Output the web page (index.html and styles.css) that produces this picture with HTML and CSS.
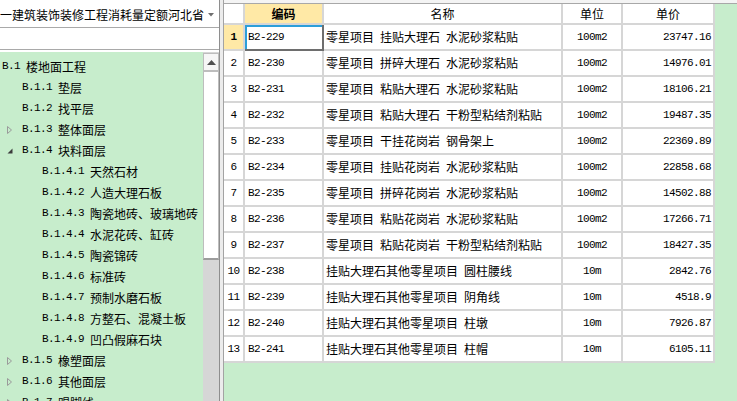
FILE: index.html
```html
<!DOCTYPE html>
<html lang="zh">
<head>
<meta charset="utf-8">
<title>定额库</title>
<link rel="stylesheet" href="styles.css">
</head>
<body>
<div class="app">
  <aside class="left">
    <div class="combo">
      <span class="combo-text">一建筑装饰装修工程消耗量定额河北省</span>
      <svg class="combo-arrow" width="6" height="4" viewBox="0 0 6 4"><polygon points="0,0 6,0 3,3.5" fill="#6f6f6f"/></svg>
    </div>
    <div class="search"></div>
    <div class="tree-wrap">
      <ul class="tree">
        <li class="node l0"><span class="m">B.1</span>楼地面工程</li>
        <li class="node l1"><span class="tg"></span><span class="m">B.1.1</span>垫层</li>
        <li class="node l1"><span class="tg"></span><span class="m">B.1.2</span>找平层</li>
        <li class="node l1"><span class="tg"><svg width="6" height="8" viewBox="0 0 6 8"><polygon points="0.5,0.5 4.5,4 0.5,7.5" fill="none" stroke="#9a9a9a"/></svg></span><span class="m">B.1.3</span>整体面层</li>
        <li class="node l1"><span class="tg"><svg width="6" height="8" viewBox="0 0 6 8"><polygon points="5.5,1.5 5.5,6.5 0.5,6.5" fill="#3c3c3c"/></svg></span><span class="m">B.1.4</span>块料面层</li>
        <li class="node l2"><span class="m">B.1.4.1</span>天然石材</li>
        <li class="node l2"><span class="m">B.1.4.2</span>人造大理石板</li>
        <li class="node l2"><span class="m">B.1.4.3</span>陶瓷地砖、玻璃地砖</li>
        <li class="node l2"><span class="m">B.1.4.4</span>水泥花砖、缸砖</li>
        <li class="node l2"><span class="m">B.1.4.5</span>陶瓷锦砖</li>
        <li class="node l2"><span class="m">B.1.4.6</span>标准砖</li>
        <li class="node l2"><span class="m">B.1.4.7</span>预制水磨石板</li>
        <li class="node l2"><span class="m">B.1.4.8</span>方整石、混凝土板</li>
        <li class="node l2"><span class="m">B.1.4.9</span>凹凸假麻石块</li>
        <li class="node l1"><span class="tg"><svg width="6" height="8" viewBox="0 0 6 8"><polygon points="0.5,0.5 4.5,4 0.5,7.5" fill="none" stroke="#9a9a9a"/></svg></span><span class="m">B.1.5</span>橡塑面层</li>
        <li class="node l1"><span class="tg"><svg width="6" height="8" viewBox="0 0 6 8"><polygon points="0.5,0.5 4.5,4 0.5,7.5" fill="none" stroke="#9a9a9a"/></svg></span><span class="m">B.1.6</span>其他面层</li>
        <li class="node l1"><span class="tg"><svg width="6" height="8" viewBox="0 0 6 8"><polygon points="0.5,0.5 4.5,4 0.5,7.5" fill="none" stroke="#9a9a9a"/></svg></span><span class="m">B.1.7</span>踢脚线</li>
      </ul>
      <div class="vscroll">
        <div class="sb-up"><svg width="9" height="5" viewBox="0 0 9 5"><polygon points="0,5 9,5 4.5,0" fill="#505050"/></svg></div>
        <div class="sb-thumb"></div>
      </div>
    </div>
  </aside>
  <div class="splitter"></div>
  <main class="right">
    <div class="topline"></div>
    <div class="grid">
      <div class="c hd"></div>
      <div class="c hd sel-col">编码</div>
      <div class="c hd">名称</div>
      <div class="c hd">单位</div>
      <div class="c hd">单价</div>

      <div class="c num sel-row m">1</div><div class="c code m cur">B2-229</div><div class="c name">零星项目 挂贴大理石 水泥砂浆粘贴</div><div class="c unit m">100m2</div><div class="c price m">23747.16</div>
      <div class="c num m">2</div><div class="c code m">B2-230</div><div class="c name">零星项目 拼碎大理石 水泥砂浆粘贴</div><div class="c unit m">100m2</div><div class="c price m">14976.01</div>
      <div class="c num m">3</div><div class="c code m">B2-231</div><div class="c name">零星项目 粘贴大理石 水泥砂浆粘贴</div><div class="c unit m">100m2</div><div class="c price m">18106.21</div>
      <div class="c num m">4</div><div class="c code m">B2-232</div><div class="c name">零星项目 粘贴大理石 干粉型粘结剂粘贴</div><div class="c unit m">100m2</div><div class="c price m">19487.35</div>
      <div class="c num m">5</div><div class="c code m">B2-233</div><div class="c name">零星项目 干挂花岗岩 钢骨架上</div><div class="c unit m">100m2</div><div class="c price m">22369.89</div>
      <div class="c num m">6</div><div class="c code m">B2-234</div><div class="c name">零星项目 挂贴花岗岩 水泥砂浆粘贴</div><div class="c unit m">100m2</div><div class="c price m">22858.68</div>
      <div class="c num m">7</div><div class="c code m">B2-235</div><div class="c name">零星项目 拼碎花岗岩 水泥砂浆粘贴</div><div class="c unit m">100m2</div><div class="c price m">14502.88</div>
      <div class="c num m">8</div><div class="c code m">B2-236</div><div class="c name">零星项目 粘贴花岗岩 水泥砂浆粘贴</div><div class="c unit m">100m2</div><div class="c price m">17266.71</div>
      <div class="c num m">9</div><div class="c code m">B2-237</div><div class="c name">零星项目 粘贴花岗岩 干粉型粘结剂粘贴</div><div class="c unit m">100m2</div><div class="c price m">18427.35</div>
      <div class="c num m">10</div><div class="c code m">B2-238</div><div class="c name">挂贴大理石其他零星项目 圆柱腰线</div><div class="c unit m">10m</div><div class="c price m">2842.76</div>
      <div class="c num m">11</div><div class="c code m">B2-239</div><div class="c name">挂贴大理石其他零星项目 阴角线</div><div class="c unit m">10m</div><div class="c price m">4518.9</div>
      <div class="c num m">12</div><div class="c code m">B2-240</div><div class="c name">挂贴大理石其他零星项目 柱墩</div><div class="c unit m">10m</div><div class="c price m">7926.87</div>
      <div class="c num m">13</div><div class="c code m">B2-241</div><div class="c name">挂贴大理石其他零星项目 柱帽</div><div class="c unit m">10m</div><div class="c price m">6105.11</div>
    </div>
  </main>
</div>
</body>
</html>
```

FILE: styles.css
```css
* { box-sizing: border-box; }
html, body { margin: 0; padding: 0; }
body {
  font-family: "Noto Sans CJK SC", "Noto Sans", sans-serif;
  font-size: 12px;
  color: #000;
  background: #fff;
}
.app {
  display: flex;
  width: 737px;
  height: 401px;
  overflow: hidden;
}
.m {
  font-family: "Liberation Mono", "Noto Sans CJK SC", monospace;
  font-size: 11px;
  letter-spacing: -0.6px;
}

/* left panel */
.left {
  width: 220px;
  flex: none;
  display: flex;
  flex-direction: column;
  border-right: 1px solid #8e8e8e;
  background: #fff;
}
.combo {
  height: 28px;
  flex: none;
  display: flex;
  align-items: center;
  padding-top: 3px;
  border-bottom: 1px solid #a9a9a9;
  overflow: hidden;
  white-space: nowrap;
}
.combo-text {
  flex: 1;
  overflow: hidden;
  line-height: 20px;
}
.combo-arrow {
  flex: none;
  margin: 0 5px 0 4px;
}
.search {
  height: 22px;
  flex: none;
  border-bottom: 1px solid #a9a9a9;
}
.tree-wrap {
  flex: 1;
  display: flex;
  margin-top: 2px;
  min-height: 0;
}
.tree {
  flex: 1;
  margin: 0;
  padding: 4px 0 0 0;
  list-style: none;
  background: #c7edcc;
  overflow: hidden;
}
.node {
  height: 21px;
  line-height: 21px;
  display: flex;
  align-items: center;
  white-space: nowrap;
}
.node .m { margin-right: 6px; }
.l0 { padding-left: 2px; }
.l1 { padding-left: 2px; }
.l2 { padding-left: 42px; }
.tg {
  width: 20px;
  flex: none;
  display: flex;
  align-items: center;
  padding-left: 5px;
}
.tg svg { display: block; }

.vscroll {
  width: 16px;
  flex: none;
  background: #d6d6d6;
  display: flex;
  flex-direction: column;
  padding-top: 1px;
}
.sb-up {
  height: 18px;
  background: #f6f6f6;
  border: 1px solid #bdbdbd;
  display: flex;
  align-items: center;
  justify-content: center;
}
.sb-thumb {
  height: 189px;
  background: #fff;
  border: 1px solid #bdbdbd;
  border-bottom: 2px solid #9c9c9c;
}

/* splitter */
.splitter {
  width: 3px;
  flex: none;
  background: #ececec;
  border-right: 1px solid #a3a3a3;
  box-sizing: content-box;
}

/* right panel */
.right {
  flex: 1;
  background: #c7edcc;
  display: flex;
  flex-direction: column;
  align-items: flex-start;
}
.topline {
  align-self: stretch;
  height: 4px;
  flex: none;
  background: #f4f4f4;
  border-bottom: 1px solid #a8a8a8;
}
.grid {
  display: grid;
  grid-template-columns: 21px 79px 239px 60px 92px;
  grid-template-rows: 21px;
  grid-auto-rows: 26px;
  background: #fff;
}
.c {
  display: flex;
  align-items: center;
  border-right: 2px solid #d6d6d6;
  border-bottom: 2px solid #d6d6d6;
  white-space: nowrap;
  overflow: hidden;
}
.hd {
  justify-content: center;
  background: #fff;
}
.sel-col {
  background: #ffe9a6;
  font-weight: bold;
}
.num { justify-content: center; }
.sel-row {
  background: #ffe9a6;
  font-weight: bold;
}
.code { padding-left: 3px; }
.cur {
  box-shadow: inset 2px 2px 0 #2c9fd9;
  border-right-color: #6e6e6e;
  border-bottom-color: #6e6e6e;
}
.name {
  padding-left: 2px;
  font-family: "Liberation Mono", "Noto Sans CJK SC", monospace;
  word-spacing: -1.2px;
}
.unit { justify-content: center; }
.price {
  justify-content: flex-end;
  padding-right: 2px;
}
```
